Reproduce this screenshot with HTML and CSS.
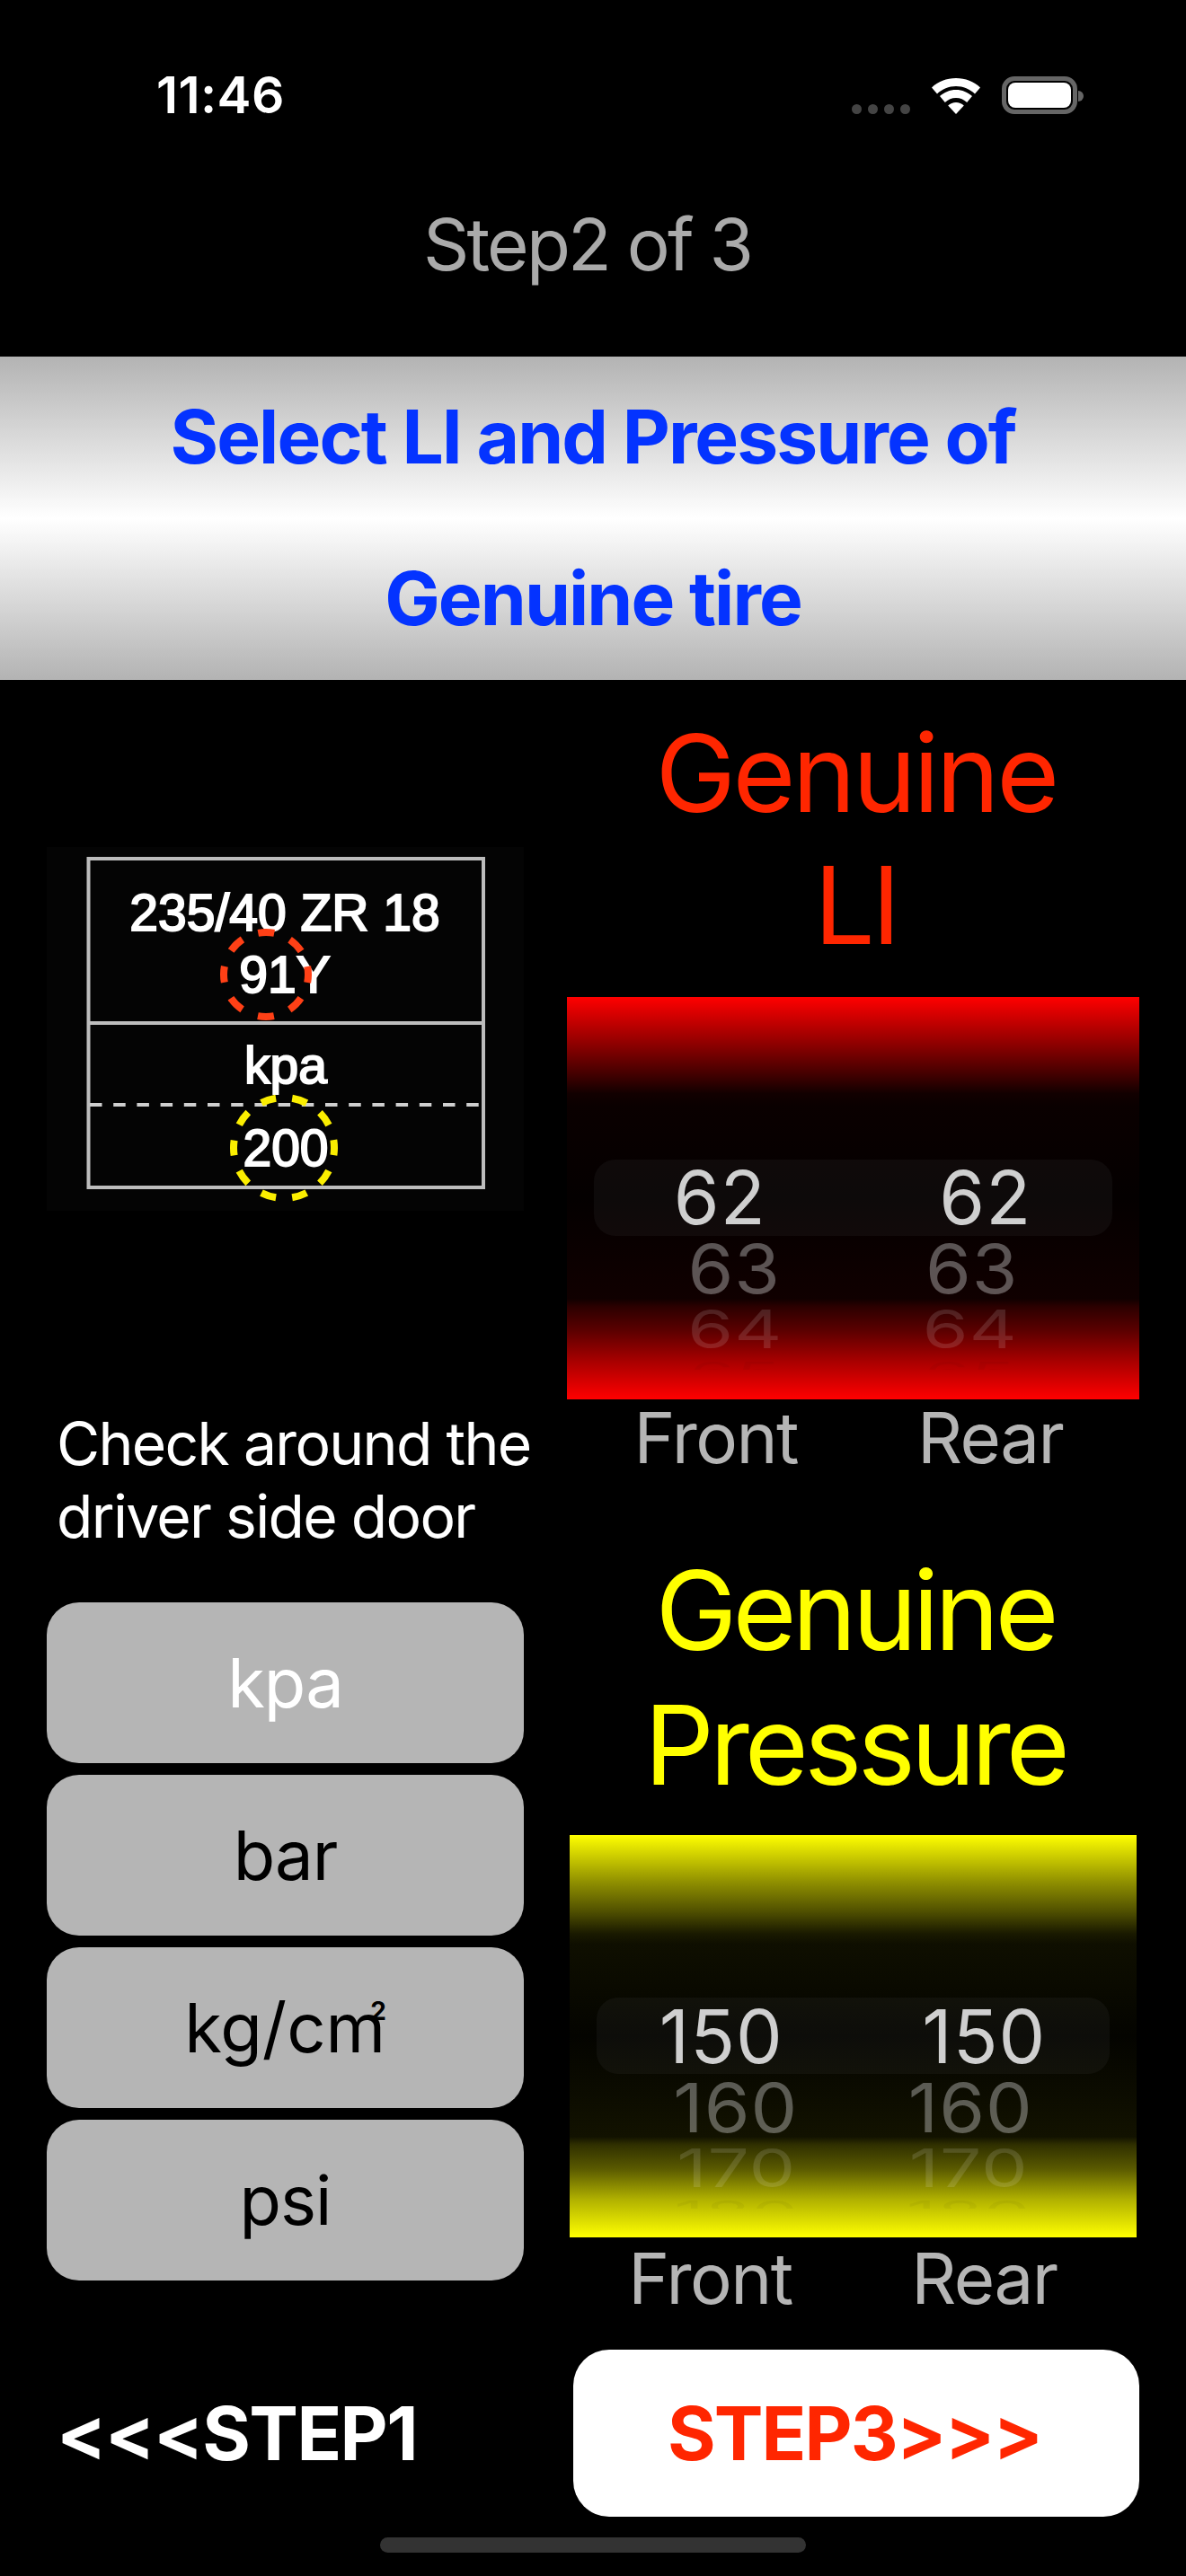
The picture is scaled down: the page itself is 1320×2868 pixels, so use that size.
FILE: index.html
```html
<!DOCTYPE html>
<html lang="en">
<head>
<meta charset="utf-8">
<title>Step2 of 3</title>
<link rel="stylesheet" href="styles.css">
</head>
<body>
<div class="screen">
  <div class="status">
    <span class="time">11:46</span>
    <div class="status-icons">
      <div class="dots"><i></i><i></i><i></i><i></i></div>
      <svg class="wifi" viewBox="0 0 54 40" width="54" height="40"><path d="M0 10.5C7 3.8 16.5 0 27 0s20 3.8 27 10.5l-6 7C42.4 12.2 35 9 27 9S11.600 12.200 6 17.500z" fill="#fff"/><path d="M9 20.100C13.800 15.700 20.100 13 27 13s13.200 2.700 18 7.100l-5.800 6.800C35.900 24 31.700 22 27 22s-8.900 2-12.200 4.900z" fill="#fff"/><path d="M18.200 30.400C20.600 28.300 23.700 27 27 27s6.400 1.300 8.800 3.400L27 40z" fill="#fff"/></svg>
      <div class="battery"><div class="battery-fill"></div></div>
    </div>
  </div>
  <div class="title">Step2 of 3</div>
  <div class="banner">Select LI and Pressure of<br>Genuine tire</div>
  <main class="main">
    <section class="left">
      <svg class="tire" viewBox="0 0 531 405" width="531" height="405">
        <rect class="tire-bg" width="531" height="405"/>
        <rect class="tire-line" x="46.500" y="13" width="439.500" height="366"/>
        <line class="tire-line" x1="46.500" y1="196" x2="486" y2="196"/>
        <line class="tire-dash" x1="48" y1="287" x2="482" y2="287"/>
        <text class="tire-text" x="265" y="93">235/40 ZR 18</text>
        <text class="tire-text" x="265" y="162">91Y</text>
        <text class="tire-text" x="266" y="263">kpa</text>
        <text class="tire-text" x="266" y="355">200</text>
        <circle class="ring ring-red" cx="244" cy="142" r="47" transform="rotate(-11 244 142)"/>
        <circle class="ring ring-yellow" cx="264" cy="335" r="56" transform="rotate(-9 264 335)"/>
      </svg>
      <p class="hint">Check around the<br>driver side door</p>
      <div class="units">
        <button class="unit unit-on">kpa</button>
        <button class="unit">bar</button>
        <button class="unit unit-wide">kg/cm<span class="sq">2</span></button>
        <button class="unit">psi</button>
      </div>
    </section>
    <section class="right">
      <h2 class="heading heading-red">Genuine<br>LI</h2>
      <div class="picker picker-red">
        <div class="pill"></div>
        <div class="wheel front"><div class="r1">62</div><div class="r2">63</div><div class="r3">64</div><div class="r4"><span>65</span></div></div>
        <div class="wheel rear"><div class="r1">62</div><div class="r2">63</div><div class="r3">64</div><div class="r4"><span>65</span></div></div>
      </div>
      <div class="labels labels-red"><span>Front</span><span>Rear</span></div>
      <h2 class="heading heading-yellow">Genuine<br>Pressure</h2>
      <div class="picker picker-yellow">
        <div class="pill"></div>
        <div class="wheel front"><div class="r1">150</div><div class="r2">160</div><div class="r3">170</div><div class="r4"><span>180</span></div></div>
        <div class="wheel rear"><div class="r1">150</div><div class="r2">160</div><div class="r3">170</div><div class="r4"><span>180</span></div></div>
      </div>
      <div class="labels labels-yellow"><span>Front</span><span>Rear</span></div>
    </section>
  </main>
  <footer class="footer">
    <span class="back">&lt;&lt;&lt;STEP1</span>
    <button class="next">STEP3&gt;&gt;&gt;</button>
  </footer>
  <div class="home"></div>
</div>
</body>
</html>
```
FILE: styles.css
```css
* { box-sizing: border-box; }
html, body { margin: 0; padding: 0; background: #000; }
body { font-family: Inter, "Liberation Sans", sans-serif; }
.screen { width: 1320px; height: 2868px; background: #000; color: #fff; overflow: hidden; }

.status { height: 148px; padding: 64px 116px 0 174px; display: flex; justify-content: space-between; align-items: flex-start; }
.time { font-size: 57px; line-height: 84px; font-weight: 600; letter-spacing: .4px; }
.status-icons { margin-top: 21px; height: 42px; display: flex; align-items: flex-end; }
.dots { display: flex; gap: 7px; margin-right: 24px; }
.dots i { display: block; width: 11px; height: 11px; border-radius: 50%; background: #444; }
.wifi { display: block; margin-right: 24px; }
.battery { position: relative; width: 84px; height: 42px; border: 5px solid #666; border-radius: 14px; padding: 2px; margin-right: 5px; }
.battery::after { content: ""; position: absolute; left: 80px; top: 11px; width: 6px; height: 12px; border-radius: 0 6px 6px 0; background: #666; }
.battery-fill { width: 100%; height: 100%; background: #fff; border-radius: 8px; }

.title { height: 249px; padding-right: 13px; line-height: 248px; font-size: 80px; text-align: center; color: #aaa; letter-spacing: -2.800px; }

.banner { height: 360px; line-height: 180px; font-size: 82px; font-weight: 700; text-align: center; color: #0433ff; letter-spacing: -1.900px; background: linear-gradient(180deg, #b3b3b3 0%, #fff 50%, #b3b3b3 100%); }

.main { height: 1823px; padding: 0 52px; display: grid; grid-template-columns: 531px 637px; column-gap: 48px; }
.left { padding-top: 186px; }
.tire { display: block; }
.tire-bg { fill: #040404; }
.tire-line { fill: none; stroke: #bdbdbd; stroke-width: 4; }
.tire-dash { stroke: #cfcfcf; stroke-width: 4; stroke-dasharray: 13.500 12.700; }
.tire-text { font-family: "Liberation Sans", Arial, sans-serif; font-size: 57px; fill: #fff; stroke: #fff; stroke-width: 2; text-anchor: middle; }
.ring { fill: none; stroke-width: 8; }
.ring-red { stroke: #ff4016; stroke-dasharray: 18 18.900; }
.ring-yellow { stroke: #fbee00; stroke-dasharray: 17 18.190; }

.hint { margin: 218.500px 0 0; padding-left: 11px; font-size: 66px; line-height: 81px; letter-spacing: -1.700px; white-space: nowrap; }
.units { margin-top: 55px; display: flex; flex-direction: column; gap: 13px; }
.unit { display: block; width: 531px; height: 179px; border: 0; border-radius: 36px; background: #b5b5b5; color: #000; font: inherit; font-size: 76px; letter-spacing: -1px; text-align: center; padding: 0; }
.unit-on { color: #fff; }
.unit-wide { letter-spacing: 0; }
.sq { font-size: 28px; font-weight: 700; vertical-align: 36px; line-height: 0; margin-left: -17px; }

.heading { margin: 0; padding-left: 6px; font-weight: 400; text-align: center; font-size: 120px; line-height: 147px; }
.heading-red { color: #ff2600; padding-top: 30px; letter-spacing: -3.600px; }
.heading-yellow { color: #ff0; margin-top: 73.500px; padding-left: 4px; font-size: 122px; line-height: 150px; letter-spacing: -5px; }

.picker { position: relative; height: 448px; display: grid; grid-template-columns: 1fr 1fr; overflow: hidden; font-size: 82px; color: #cfcfcf; letter-spacing: 1px; }
.picker-red { margin-top: 29px; padding-top: 181px; background: linear-gradient(180deg, #f00 0%, #900000 11.500%, #400000 19.500%, #120000 24%, #0a0000 27%, #040000 50%, #100000 75%, #2c0000 77%, #5c0000 83%, #a80000 90.500%, #f00 100%); }
.picker-yellow { margin: 25.500px 3px 0; padding-top: 182px; background: linear-gradient(180deg, #ff0 0%, #969600 11%, #505000 19%, #1a1a00 24.500%, #0f0f00 27%, #040400 50%, #121200 75%, #303000 77%, #5a5a00 83%, #b0b000 90.500%, #ff0 100%); }
.pill { position: absolute; left: 30px; right: 30px; top: 181px; height: 85px; border-radius: 24px; background: rgba(255, 255, 255, .04); }
.wheel { position: relative; display: flex; flex-direction: column; align-items: center; text-align: center; }
.r1 { height: 85px; line-height: 85px; transform: translateX(var(--x1)); }
.r2 { height: 73px; line-height: 73px; color: rgba(255, 255, 255, .33); transform: translateX(var(--x2)) scaleY(.92); }
.r3 { height: 61px; line-height: 61px; color: rgba(255, 255, 255, .13); transform: translateX(var(--x3)) scaleY(.72); }
.r4 { height: 9px; margin-top: 6px; overflow: hidden; transform: translateX(var(--x3)); }
.r4 span { display: block; line-height: 60px; color: rgba(0, 0, 0, .04); transform: scaleY(.4); transform-origin: top; }
.front { --x1: 11px; --x2: 27px; --x3: 28px; }
.rear { --x1: -12px; --x2: -27px; --x3: -29px; }

.labels { display: grid; grid-template-columns: 1fr 1fr; text-align: center; color: #b5b5b5; font-size: 78px; line-height: 86px; letter-spacing: -1.500px; }
.labels-red { padding: 0 13px; }
.labels-yellow { padding: 3px 20px 0 7px; }

.footer { height: 186px; margin-top: 36px; padding: 0 52px 0 63px; display: flex; justify-content: space-between; align-items: center; }
.back { font-size: 82px; font-weight: 700; letter-spacing: -1.600px; }
.next { width: 630px; height: 186px; border: 0; border-radius: 40px; background: #fff; color: #ff2600; font: inherit; font-size: 82px; font-weight: 700; letter-spacing: -1.900px; padding: 0 4px 0 0; }

.home { width: 474px; height: 17px; margin: 23px auto 0; border-radius: 9px; background: #333; }
```
